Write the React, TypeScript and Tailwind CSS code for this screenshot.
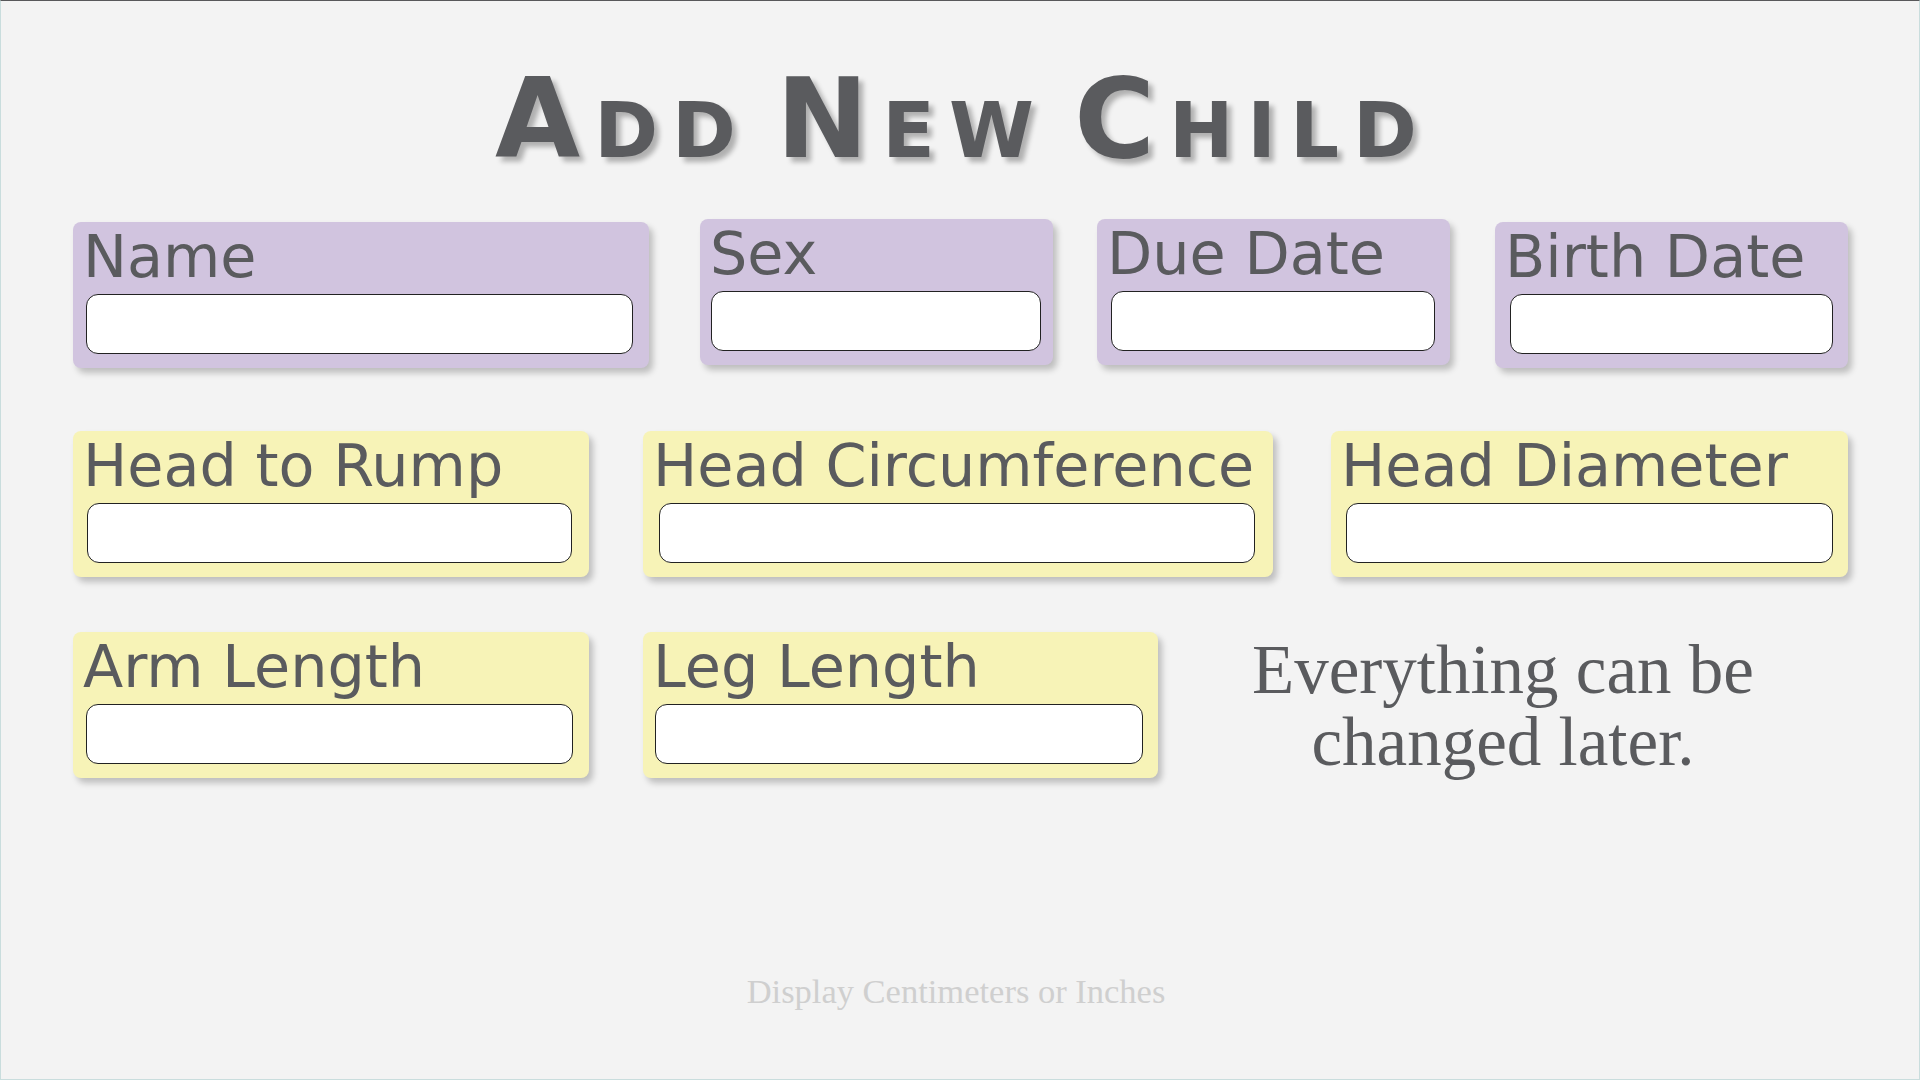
import React from "react";

type FieldProps = {
  label: string;
  box: string;
  input: string;
  color: "purple" | "yellow";
};

function Field({ label, box, input, color }: FieldProps) {
  const bg = color === "purple" ? "bg-[#d1c4df]" : "bg-[#f7f3b7]";
  return (
    <div
      className={`${bg} ${box} flex flex-col rounded-lg pt-[1px] pb-[14px] shadow-[4px_5px_6px_rgba(0,0,0,0.22)]`}
    >
      <div className="h-[68px] whitespace-nowrap pl-[10px] font-['DejaVu_Sans',sans-serif] text-[58.8px] leading-[68px] text-[#5a5b5e]">
        {label}
      </div>
      <div
        className={`${input} mt-[3px] h-[60px] rounded-xl border-[1.5px] border-[#222222] bg-white`}
      />
    </div>
  );
}

export default function App() {
  return (
    <div className="relative flex h-[1080px] w-[1920px] flex-col overflow-hidden border-t border-l border-r border-b border-[#c9dddd] border-t-[#58585a] bg-[#f3f3f3]">
      <h1 className="pt-[54px] pl-[6px] text-center font-['DejaVu_Sans',sans-serif] text-[110px] font-bold leading-[128px] tracking-[14px] text-[#5a5b5e] [font-variant:small-caps] [word-spacing:-26px] [text-shadow:5px_5px_5px_rgba(0,0,0,0.28)]">
        Add New Child
      </h1>

      <div className="mt-[36px] flex items-start pl-[72px]">
        <Field label="Name" color="purple" box="w-[576px] mt-[3px]" input="ml-[13px] mr-[16px]" />
        <Field label="Sex" color="purple" box="w-[353px] ml-[51px]" input="ml-[11px] mr-[12px]" />
        <Field label="Due Date" color="purple" box="w-[353px] ml-[44px]" input="ml-[14px] mr-[15px]" />
        <Field label="Birth Date" color="purple" box="w-[353px] ml-[45px] mt-[3px]" input="ml-[15px] mr-[15px]" />
      </div>

      <div className="mt-[63px] flex items-start pl-[72px]">
        <Field label="Head to Rump" color="yellow" box="w-[516px]" input="ml-[14px] mr-[17px]" />
        <Field label="Head Circumference" color="yellow" box="w-[630px] ml-[54px]" input="ml-[16px] mr-[18px]" />
        <Field label="Head Diameter" color="yellow" box="w-[517px] ml-[58px]" input="ml-[15px] mr-[15px]" />
      </div>

      <div className="mt-[55px] flex items-start pl-[72px]">
        <Field label="Arm Length" color="yellow" box="w-[516px]" input="ml-[13px] mr-[16px]" />
        <Field label="Leg Length" color="yellow" box="w-[515px] ml-[54px]" input="ml-[12px] mr-[15px]" />
        <p className="mt-[2px] w-[690px] text-center font-['Liberation_Serif',serif] text-[69px] leading-[72px] text-[#5a5b5e]">
          Everything can be
          <br />
          changed later.
        </p>
      </div>

      <p className="mt-[193px] pr-[8px] text-center font-['Liberation_Serif',serif] text-[34.5px] leading-[40px] text-[#cfcfcf]">
        Display Centimeters or Inches
      </p>
    </div>
  );
}
